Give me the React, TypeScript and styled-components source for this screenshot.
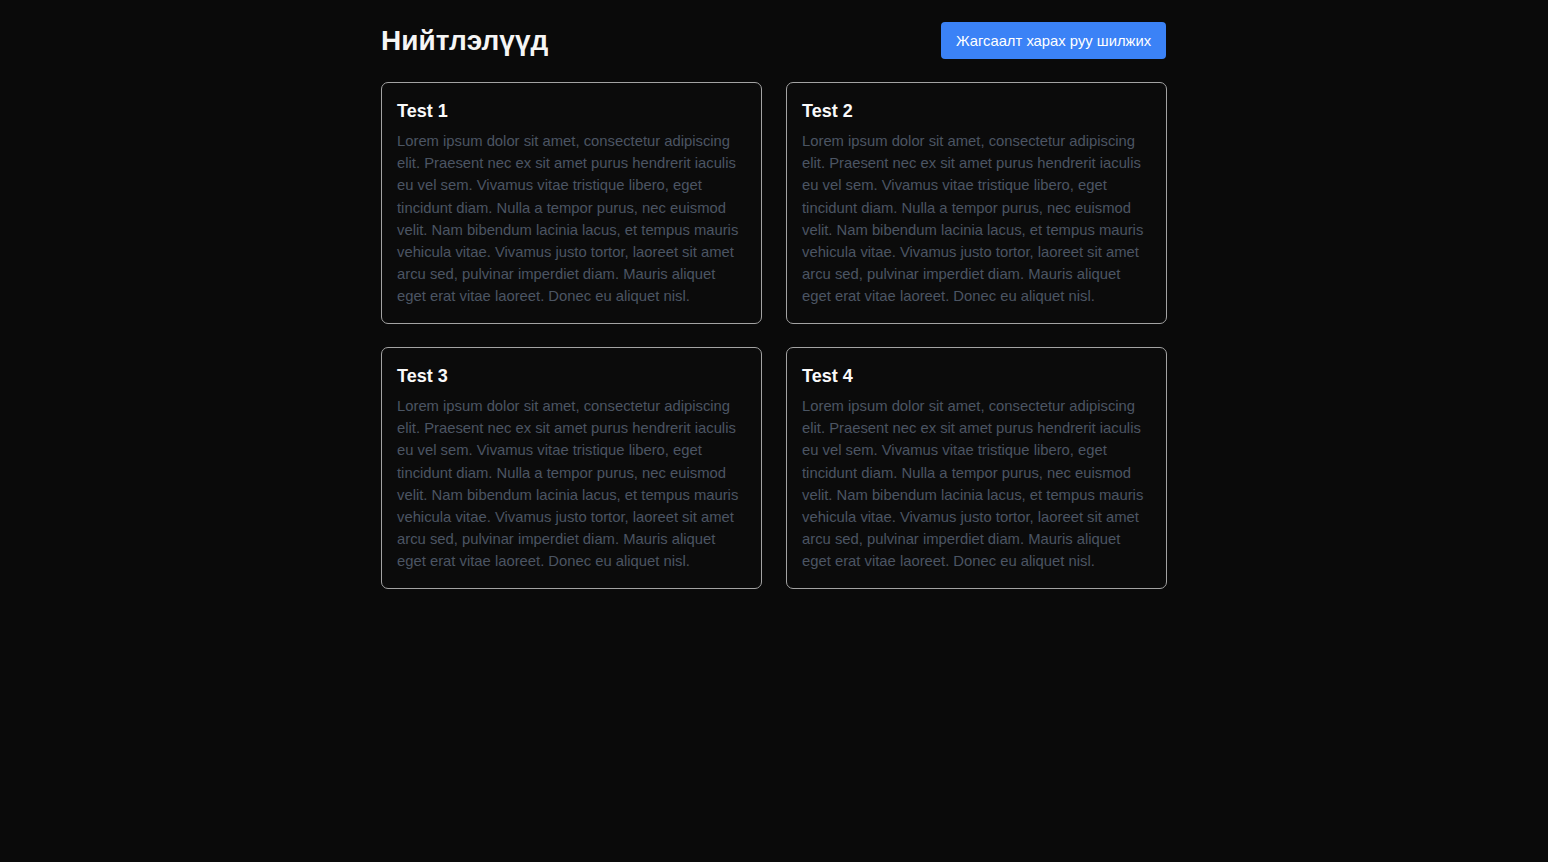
import React from "react";
import styled, { createGlobalStyle } from "styled-components";

const Global = createGlobalStyle`
  html, body { margin: 0; padding: 0; background: #0a0a0a; }
  body { font-family: "Liberation Sans", Arial, sans-serif; color: #f3f4f6; min-height: 862px; }
`;

const Page = styled.main`
  width: 786px;
  margin: 0 auto;
  padding-top: 22px;
`;

const Header = styled.header`
  display: flex;
  align-items: center;
  justify-content: space-between;
  margin-bottom: 23px;
`;

const Title = styled.h1`
  margin: 0;
  font-size: 28px;
  font-weight: 700;
  color: #f5f5f5;
`;

const Button = styled.button`
  height: 37px;
  width: 225px;
  margin-right: 1px;
  border: none;
  border-radius: 4px;
  background: #3b82f6;
  color: #fff;
  font-family: "Liberation Sans", Arial, sans-serif;
  font-size: 14.8px;
  cursor: pointer;
`;

const Grid = styled.section`
  display: grid;
  grid-template-columns: 381px 381px;
  justify-content: space-between;
  row-gap: 23px;
`;

const Card = styled.article`
  border: 1.5px solid #a3a3a3;
  border-radius: 7px;
  background: #0b0b0b;
  padding: 14px 15px 16px;
  height: 242px;
  box-sizing: border-box;
`;

const CardTitle = styled.h2`
  margin: 0 0 5px;
  font-size: 18px;
  font-weight: 700;
  color: #fafafa;
  line-height: 28px;
`;

const CardText = styled.p`
  margin: 0;
  font-size: 14.8px;
  line-height: 22.2px;
  color: #4b5563;
`;

const lorem =
  "Lorem ipsum dolor sit amet, consectetur adipiscing elit. Praesent nec ex sit amet purus hendrerit iaculis eu vel sem. Vivamus vitae tristique libero, eget tincidunt diam. Nulla a tempor purus, nec euismod velit. Nam bibendum lacinia lacus, et tempus mauris vehicula vitae. Vivamus justo tortor, laoreet sit amet arcu sed, pulvinar imperdiet diam. Mauris aliquet eget erat vitae laoreet. Donec eu aliquet nisl.";

const posts = ["Test 1", "Test 2", "Test 3", "Test 4"];

export default function App() {
  return (
    <>
      <Global />
      <Page>
        <Header>
          <Title>Нийтлэлүүд</Title>
          <Button>Жагсаалт харах руу шилжих</Button>
        </Header>
        <Grid>
          {posts.map((p) => (
            <Card key={p}>
              <CardTitle>{p}</CardTitle>
              <CardText>{lorem}</CardText>
            </Card>
          ))}
        </Grid>
      </Page>
    </>
  );
}
